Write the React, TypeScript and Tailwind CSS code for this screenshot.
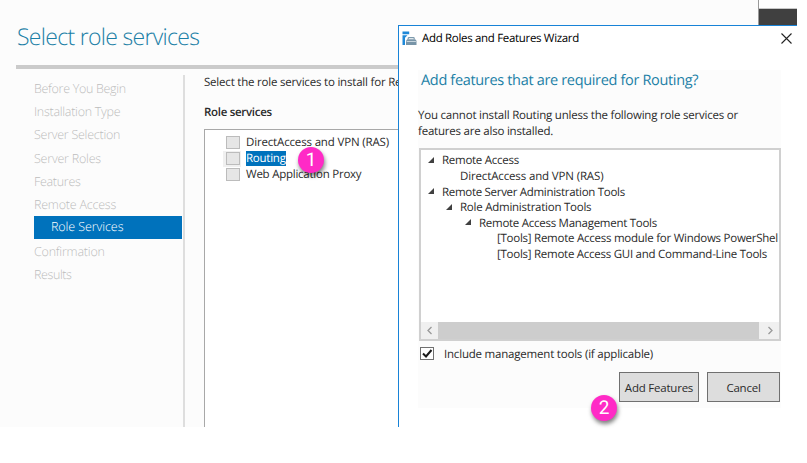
import React from "react";

const steps = [
  { label: "Before You Begin", track: "tracking-[-0.3px]" },
  { label: "Installation Type", track: "tracking-[-0.28px]" },
  { label: "Server Selection", track: "tracking-[-0.26px]" },
  { label: "Server Roles", track: "tracking-[-0.22px]" },
  { label: "Features", track: "tracking-[-0.3px]" },
  { label: "Remote Access", track: "tracking-[-0.22px]" },
  { label: "Role Services", track: "tracking-[-0.08px]", active: true },
  { label: "Confirmation", track: "tracking-[-0.22px]" },
  { label: "Results", track: "tracking-[-0.4px]" },
];

const roles = [
  { label: "DirectAccess and VPN (RAS)", track: "tracking-[-0.16px]" },
  { label: "Routing", track: "tracking-[-0.24px]", selected: true },
  { label: "Web Application Proxy", track: "tracking-[-0.24px]" },
];

const tree = [
  { label: "Remote Access", indent: "pl-[6px]", open: true, track: "tracking-[-0.27px]" },
  { label: "DirectAccess and VPN (RAS)", indent: "pl-[24px]", open: false, track: "tracking-[-0.14px]" },
  { label: "Remote Server Administration Tools", indent: "pl-[6px]", open: true, track: "tracking-[-0.3px]" },
  { label: "Role Administration Tools", indent: "pl-[24px]", open: true, track: "tracking-[-0.24px]" },
  { label: "Remote Access Management Tools", indent: "pl-[43px]", open: true, track: "tracking-[-0.27px]" },
  { label: "[Tools] Remote Access module for Windows PowerShel", indent: "pl-[61px]", open: false, track: "tracking-[-0.25px]" },
  { label: "[Tools] Remote Access GUI and Command-Line Tools", indent: "pl-[61px]", open: false, track: "tracking-[-0.26px]" },
];

function Badge({ n, place }: { n: number; place: string }) {
  return (
    <span
      className={`absolute z-20 flex h-[26px] w-[26px] items-center justify-center rounded-full bg-[#ff2ac6] font-['Roboto',sans-serif] text-[19px] text-white shadow-[1px_3px_4px_rgba(0,0,0,0.5)] ${place}`}
    >
      {n}
    </span>
  );
}

function WizardIcon() {
  return (
    <svg width="15" height="15" viewBox="0 0 15 15" className="shrink-0">
      <path d="M0.500 0.500h6.700v2.700H0.500zM0.500 4.200h5L3 6.800v7.200H0.500z" fill="#1e88d8" />
      <path d="M6.200 8.200V7.400c0-.5.3-.8.8-.8h4.400c.5 0 .8.3.8.8v.8" fill="none" stroke="#7d9aad" strokeWidth="1.200" />
      <path d="M4 9.800l1.200-1.500h8L14.500 9.800v4.200H4z" fill="#7895a8" />
      <path d="M4.600 10.500h9.300" stroke="#dce6ec" strokeWidth="0.800" />
    </svg>
  );
}

function Sidebar() {
  return (
    <nav className="mt-[6px] flex h-[352px] w-[151px] shrink-0 flex-col border-r-2 border-[#dedede] pt-[2px] pr-[1px] text-[12.500px] font-light">
      {steps.map((s) => (
        <div
          key={s.label}
          className={`flex h-[23.250px] shrink-0 items-center pt-px ${s.track} ${
            s.active ? "-mt-px mb-px bg-[#0072bc] pt-[2px] pl-[17px] text-white" : "text-[#bdbdbd]"
          }`}
        >
          {s.label}
        </div>
      ))}
    </nav>
  );
}

function RoleList() {
  return (
    <div className="mt-[8px] h-[298px] border-t border-l border-[#a8a8a8] bg-white pt-[5px] pl-[18px]">
      {roles.map((r) => (
        <div key={r.label} className="flex h-[15.700px] items-center">
          <span className={`mr-[5px] flex h-[16px] w-[18px] items-center justify-center ${r.selected ? "bg-[#f0f0f0]" : ""}`}>
            <span className="ml-[1px] h-[13px] w-[14px] border border-[#bcbcbc] bg-[#e6e6e6]" />
          </span>
          <span className={`h-[15px] leading-[16px] ${r.track} ${r.selected ? "bg-[#0072bc] text-white" : ""}`}>{r.label}</span>
        </div>
      ))}
    </div>
  );
}

function Dialog() {
  return (
    <section className="absolute top-[25px] left-[398px] z-10 flex h-[402px] w-[399px] flex-col border-t border-l border-[#1883d7] bg-white">
      <header className="flex h-[25px] shrink-0 items-center pr-[5px] pl-[3px] text-black">
        <WizardIcon />
        <span className="ml-[5px] flex-1 tracking-[-0.32px]">Add Roles and Features Wizard</span>
        <svg width="11" height="11" viewBox="0 0 11 11" stroke="#222" strokeWidth="1.100">
          <path d="M0.500 0.500l10 10M10.500 0.500l-10 10" />
        </svg>
      </header>
      <div className="mt-[19px] ml-[19px] flex h-[338px] w-[363px] flex-col bg-[#fcfcfc]">
        <h2 className="pt-[1px] pl-[3px] text-[14.500px] leading-[20px] tracking-[-0.33px] text-[#1b7fa6]">
          Add features that are required for Routing?
        </h2>
        <p className="mt-[17px] leading-[15.600px] tracking-[-0.21px]">
          You cannot install Routing unless the following role services or
          <br />
          features are also installed.
        </p>
        <div className="mt-[9px] ml-[1px] flex h-[193px] w-[362px] shrink-0 flex-col border-2 border-[#d0d0d0] bg-white">
          <div className="flex-1 overflow-hidden pt-[3px]">
            {tree.map((t) => (
              <div key={t.label} className={`flex h-[15.600px] items-center ${t.indent}`}>
                <span className="flex w-[15px] shrink-0">
                  {t.open && (
                    <svg width="8" height="8" viewBox="0 0 8 8">
                      <path d="M7 0v6H1z" fill="#404040" />
                    </svg>
                  )}
                </span>
                <span className={`whitespace-nowrap ${t.track}`}>{t.label}</span>
              </div>
            ))}
          </div>
          <div className="flex h-[17px] shrink-0 items-center justify-between bg-[#f0f0f0] text-[#999]">
            <svg width="17" height="17" viewBox="0 0 17 17" fill="none" stroke="currentColor" strokeWidth="1.300">
              <path d="M10.500 5l-3.500 3.500 3.500 3.500" />
            </svg>
            <span className="h-full flex-1 bg-[#cdcdcd]" />
            <svg width="20" height="17" viewBox="0 0 20 17" fill="none" stroke="currentColor" strokeWidth="1.300">
              <path d="M9.500 5l3.500 3.500L9.500 12" />
            </svg>
          </div>
        </div>
        <label className="mt-[6px] ml-[2px] flex h-[13px] items-center">
          <svg width="14" height="13" viewBox="0 0 14 13">
            <rect x="0.500" y="0.500" width="13" height="12" fill="#fff" stroke="#707070" />
            <path d="M3 6.500l3 3 5.500-6.500" fill="none" stroke="#1a1a1a" strokeWidth="2" />
          </svg>
          <span className="mt-px ml-[10px] tracking-[-0.2px]">Include management tools (if applicable)</span>
        </label>
        <div className="mt-[12px] flex justify-end gap-[8px] pr-[1px]">
          <button className="h-[30px] w-[80px] border border-[#707070] bg-[#dddddd] tracking-[-0.22px]">Add Features</button>
          <button className="h-[30px] w-[73px] border border-[#707070] bg-[#dddddd] tracking-[-0.22px]">Cancel</button>
        </div>
      </div>
    </section>
  );
}

export default function App() {
  return (
    <div className="h-[463px] w-[807px] overflow-hidden bg-white font-['Open_Sans','Noto_Sans',sans-serif] text-[11.500px] text-[#2b2b2b] [text-rendering:geometricPrecision]">
      <div className="relative flex h-[427px] w-[797px]">
        <main className="flex w-[759px] shrink-0 flex-col border-r border-[#999] bg-[#fcfcfc] pl-[16px]">
          <h1 className="h-[65px] shrink-0 pt-[20px] pl-[1px] text-[23px] leading-[32px] font-light tracking-[-0.7px] text-[#1b7fa6]">
            Select role services
          </h1>
          <div className="h-[4px] shrink-0 bg-[#cbcbcb]" />
          <div className="flex h-[358px] overflow-hidden">
            <div className="flex pl-[18px]">
              <Sidebar />
            </div>
            <div className="ml-[19px] flex-1 pt-[5px]">
              <p className="h-[17px] leading-[18px] whitespace-nowrap tracking-[-0.2px]">
                Select the role services to install for Re
              </p>
              <h3 className="mt-[13px] h-[17px] leading-[18px] font-semibold tracking-[-0.3px]">Role services</h3>
              <RoleList />
            </div>
          </div>
        </main>
        <aside className="flex flex-1 flex-col pt-[8px]">
          <div className="h-[18px] border-t border-[#c8c8c8] bg-[#404040]" />
        </aside>
        <Dialog />
        <Badge n={1} place="top-[147px] left-[298px]" />
        <Badge n={2} place="top-[395px] left-[591px]" />
      </div>
    </div>
  );
}
